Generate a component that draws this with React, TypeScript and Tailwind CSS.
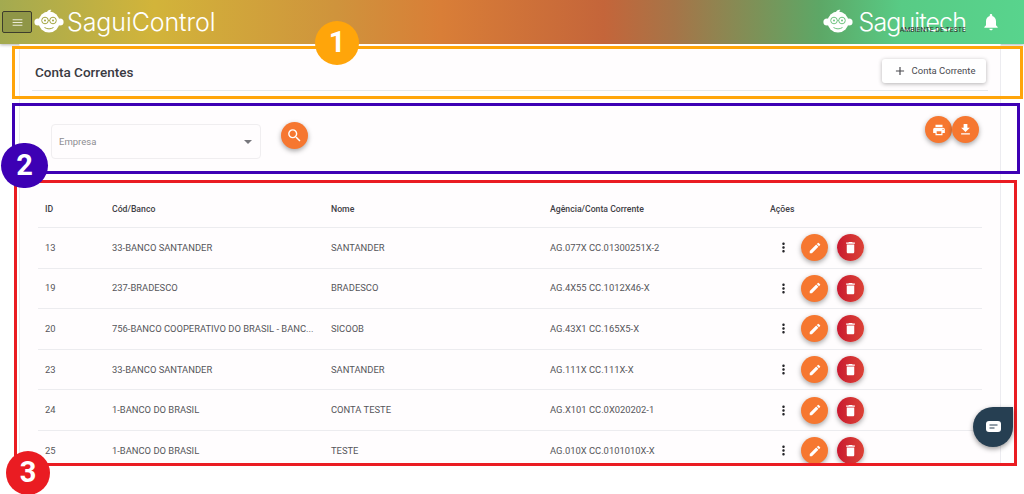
import { MdAdd, MdDelete, MdEdit, MdFileDownload, MdMenu, MdMoreVert, MdNotifications, MdPrint, MdSearch } from "react-icons/md";

const rows = [
  { id: "13", banco: "33-BANCO SANTANDER", nome: "SANTANDER", conta: "AG.077X CC.01300251X-2" },
  { id: "19", banco: "237-BRADESCO", nome: "BRADESCO", conta: "AG.4X55 CC.1012X46-X" },
  { id: "20", banco: "756-BANCO COOPERATIVO DO BRASIL - BANC...", nome: "SICOOB", conta: "AG.43X1 CC.165X5-X" },
  { id: "23", banco: "33-BANCO SANTANDER", nome: "SANTANDER", conta: "AG.111X CC.111X-X" },
  { id: "24", banco: "1-BANCO DO BRASIL", nome: "CONTA TESTE", conta: "AG.X101 CC.0X020202-1" },
  { id: "25", banco: "1-BANCO DO BRASIL", nome: "TESTE", conta: "AG.010X CC.0101010X-X" },
];

function MonkeyLogo({ tint }: { tint: string }) {
  return (
    <svg width="30" height="26" viewBox="0 0 30 26" fill="none">
      <circle cx="4" cy="13" r="3.6" fill="white" />
      <circle cx="26" cy="13" r="3.6" fill="white" />
      <circle cx="15" cy="13" r="10.5" fill="white" />
      <path d="M13 3.5c.5-2 2-3 4.5-2.5-1 .6-1.3 1.5-1 2.5z" fill="white" />
      <circle cx="11" cy="11.5" r="3.3" stroke={tint} strokeWidth="1" />
      <circle cx="19" cy="11.5" r="3.3" stroke={tint} strokeWidth="1" />
      <path d="M14.3 11.5h1.4" stroke={tint} strokeWidth="1" />
      <circle cx="11" cy="11.5" r="1" fill={tint} />
      <circle cx="19" cy="11.5" r="1" fill={tint} />
      <path d="M10.5 18.5c3 1.8 6 1.8 9 0" stroke={tint} strokeWidth="1" />
    </svg>
  );
}

function RoundButton({ children, red }: { children: React.ReactNode; red?: boolean }) {
  return (
    <button
      className={`flex h-[27px] w-[27px] items-center justify-center rounded-full text-white shadow-[0_2px_5px_rgba(0,0,0,0.35)] ${
        red ? "bg-gradient-to-r from-[#c9172f] to-[#db4136]" : "bg-[#f67730]"
      }`}
    >
      {children}
    </button>
  );
}

export default function App() {
  return (
    <div className="relative h-[494px] w-[1024px] overflow-hidden bg-white font-['Roboto',sans-serif] text-[#3f3f46]">
      {/* Topo */}
      <header className="flex h-[44px] items-center justify-between bg-[linear-gradient(90deg,#a3aa50_0%,#d2b43a_15%,#cf933c_33%,#d97e37_43%,#c4653a_59%,#a57548_66%,#7c9258_74%,#5da766_80%,#58cb85_88%,#58d48d_100%)] shadow-[0_1px_3px_rgba(0,0,0,0.3)]">
        <div className="flex items-center">
          <button className="ml-[2px] flex h-[22px] w-[30px] items-center justify-center rounded-[2px] border border-[#3d3d2c] bg-[#8f9647] text-[#ecebd8]">
            <MdMenu size={13} />
          </button>
          <div className="ml-[2px]">
            <MonkeyLogo tint="#a3a53f" />
          </div>
          <span className="ml-[3px] font-['Inter',sans-serif] text-[25px] leading-none font-light tracking-[-0.1px] text-white">
            SaguiControl
          </span>
        </div>
        <div className="relative mr-[23px] flex items-center">
          <MonkeyLogo tint="#6fc480" />
          <span className="ml-[6px] font-['Inter',sans-serif] text-[25px] leading-none font-light tracking-[-0.9px] text-white">Saguitech</span>
          <span className="absolute top-[16px] right-[35px] text-[7px] whitespace-nowrap text-[#2c2c2c]">AMBIENTE DE TESTE</span>
          <MdNotifications size={20} className="ml-[15px] text-white" />
        </div>
      </header>

      {/* Painel */}
      <main className="ml-[19px] h-[419px] w-[982px] overflow-hidden border-x border-[#ececf0] bg-[#fffdfe]">
        <section className="mx-[12px] mt-[2px] flex h-[45px] items-center justify-between border-b border-[#e6e9ea] pt-[6px] pr-[2px] pl-[3px]">
          <h1 className="mt-[2px] text-[13.5px] font-medium text-[#3a3a42]">Conta Correntes</h1>
          <button className="flex h-[24px] w-[104px] items-center justify-center gap-[5px] rounded-[3px] bg-white text-[9.5px] text-[#4a4a4f] shadow-[0_1px_4px_rgba(0,0,0,0.3)]">
            <MdAdd size={14} />
            Conta Corrente
          </button>
        </section>

        <section className="flex h-[97px] items-start pt-[33px] pr-[21px] pl-[31px]">
          <div className="flex h-[35px] w-[210px] items-center justify-between rounded-[4px] border border-[#f0eef0] pr-[8px] pl-[7px] text-[9.5px] text-[#8d8d92]">
            <span className="mt-[2px]">Empresa</span>
            <span className="h-0 w-0 border-x-[4px] border-t-[4px] border-x-transparent border-t-[#77777c]" />
          </div>
          <div className="mt-[-2px] ml-[20px]">
            <RoundButton>
              <MdSearch size={17} />
            </RoundButton>
          </div>
          <div className="mt-[-8px] ml-auto flex">
            <RoundButton>
              <MdPrint size={14} />
            </RoundButton>
            <RoundButton>
              <MdFileDownload size={15} />
            </RoundButton>
          </div>
        </section>

        <div className="ml-[18px] w-[944px] text-[9.4px]">
          <div className="grid h-[40px] grid-cols-[67px_219px_219px_220px_1fr] items-center border-b border-[#ececef] pt-[4px] pl-[7px] text-[8.7px] font-medium text-[#3f3f46]">
            <span>ID</span>
            <span>Cód/Banco</span>
            <span>Nome</span>
            <span>Agência/Conta Corrente</span>
            <span>Ações</span>
          </div>
          {rows.map((r) => (
            <div
              key={r.id}
              className="grid h-[40.6px] grid-cols-[67px_219px_219px_220px_1fr] items-center border-b border-[#ececef] pl-[7px] text-[#55555a]"
            >
              <span>{r.id}</span>
              <span className="truncate pr-[2px]">{r.banco}</span>
              <span>{r.nome}</span>
              <span>{r.conta}</span>
              <div className="flex items-center">
                <MdMoreVert size={15} className="ml-[6px] text-[#26262a]" />
                <div className="ml-[10px] flex gap-[9px]">
                  <RoundButton>
                    <MdEdit size={14} />
                  </RoundButton>
                  <RoundButton red>
                    <MdDelete size={15} />
                  </RoundButton>
                </div>
              </div>
            </div>
          ))}
        </div>
      </main>

      {/* Marcações sobre o print */}
      <div className="absolute top-[46px] left-[12px] h-[53px] w-[1011px] border-[3px] border-[#ffa50a]" />
      <div className="absolute top-[103px] left-[12px] h-[71px] w-[1008px] border-[3px] border-[#3d00b4]" />
      <div className="absolute top-[180px] left-[14px] h-[286px] w-[1003px] border-[3px] border-[#ea1c22]" />
      <div className="absolute top-[21px] left-[315px] flex h-[44px] w-[44px] items-center justify-center rounded-full bg-[#ffa50a] text-[29px] font-bold text-white">1</div>
      <div className="absolute top-[143px] left-[1px] flex h-[45px] w-[47px] items-center justify-center rounded-full bg-[#3d00b4] text-[29px] font-bold text-white">2</div>
      <div className="absolute top-[451px] left-[6px] flex h-[44px] w-[44px] items-center justify-center rounded-full bg-[#ea1c22] text-[29px] font-bold text-white">3</div>

      {/* Chat */}
      <button className="absolute top-[407px] left-[973px] flex h-[40px] w-[40px] items-center justify-center rounded-full rounded-tr-[6px] bg-[#263f52] shadow-[0_2px_5px_rgba(0,0,0,0.4)]">
        <svg width="15" height="12" viewBox="0 0 15 12">
          <rect width="15" height="11" rx="3" fill="white" />
          <path d="M3.5 4h8M3.5 7h5" stroke="#263f52" strokeWidth="1" />
        </svg>
      </button>
    </div>
  );
}
